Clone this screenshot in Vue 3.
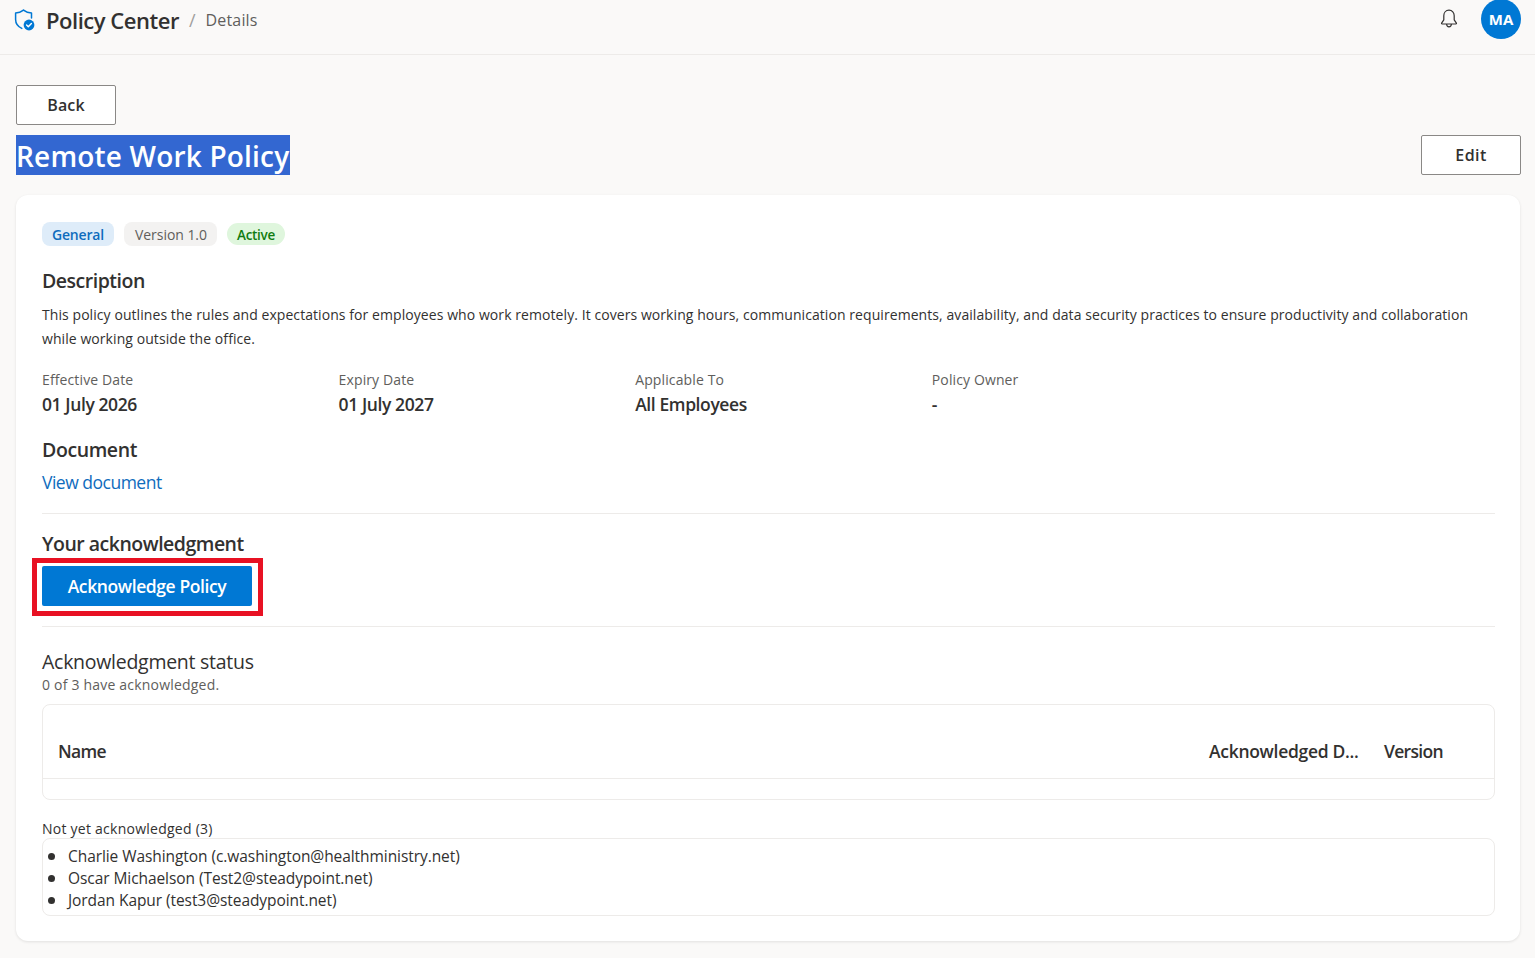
<script setup>
const meta = [
  { label: 'Effective Date', value: '01 July 2026' },
  { label: 'Expiry Date', value: '01 July 2027' },
  { label: 'Applicable To', value: 'All Employees' },
  { label: 'Policy Owner', value: '-' },
]
const pending = [
  'Charlie Washington (c.washington@healthministry.net)',
  'Oscar Michaelson (Test2@steadypoint.net)',
  'Jordan Kapur (test3@steadypoint.net)',
]
</script>

<template>
  <div class="page">
    <header class="topbar">
      <div class="brand">
        <svg class="logo" width="24" height="24" viewBox="0 0 24 24" fill="none">
          <path d="M10.5 2.2 C8 4.2 5.2 5 2.6 5.1 V11.5 C2.6 15.8 5 18.6 8.8 20.4" stroke="#0078d4" stroke-width="1.5" stroke-linejoin="round" stroke-linecap="round"/>
          <path d="M10.5 2.2 C13 4.2 15.8 5 18.5 5.1 V10" stroke="#0078d4" stroke-width="1.5" stroke-linejoin="round" stroke-linecap="round"/>
          <circle cx="16" cy="17" r="5.4" fill="#0078d4"/>
          <path d="M13.6 17.1 L15.3 18.8 L18.4 15.5" stroke="#fff" stroke-width="1.4" fill="none" stroke-linecap="round" stroke-linejoin="round"/>
        </svg>
        <span class="app-name">Policy Center</span>
        <span class="slash">/</span>
        <span class="crumb">Details</span>
      </div>
      <div class="actions">
        <svg width="20" height="20" viewBox="0 0 20 20" fill="none" stroke="#323130" stroke-width="1.2" stroke-linejoin="round">
          <path d="M10 1.2 C6.8 1.2 4.8 3.8 4.8 6.8 V10.8 L2.6 14.2 C2.4 14.7 2.6 15 3.1 15 H16.9 C17.4 15 17.6 14.7 17.4 14.2 L15.2 10.8 V6.8 C15.2 3.8 13.2 1.2 10 1.2 Z"/>
          <path d="M7.6 15 C7.7 16.8 8.7 17.9 10 17.9 C11.3 17.9 12.3 16.8 12.4 15"/>
        </svg>
        <div class="avatar">MA</div>
      </div>
    </header>

    <main class="content">
      <button class="btn">Back</button>
      <div class="title-row">
        <h1 class="title"><span>Remote Work Policy</span></h1>
        <button class="btn btn-edit">Edit</button>
      </div>

      <section class="card">
        <div class="tags">
          <span class="tag tag-blue">General</span>
          <span class="tag tag-grey">Version 1.0</span>
          <span class="tag tag-green">Active</span>
        </div>

        <h2 class="h-desc">Description</h2>
        <p class="desc">This policy outlines the rules and expectations for employees who work remotely. It covers working hours, communication requirements, availability, and data security practices to ensure productivity and collaboration while working outside the office.</p>

        <div class="meta">
          <div v-for="m in meta" :key="m.label" class="meta-item">
            <div class="meta-label">{{ m.label }}</div>
            <div class="meta-value">{{ m.value }}</div>
          </div>
        </div>

        <h2 class="h-doc">Document</h2>
        <a class="doc-link">View document</a>

        <hr class="rule rule-a" />

        <h2 class="h-ack">Your acknowledgment</h2>
        <div class="ack-frame">
          <button class="btn-primary">Acknowledge Policy</button>
        </div>

        <hr class="rule rule-b" />

        <h3 class="status-title">Acknowledgment status</h3>
        <div class="status-sub">0 of 3 have acknowledged.</div>

        <div class="table">
          <div class="thead">
            <div class="th th-name">Name</div>
            <div class="th th-date">Acknowledged D...</div>
            <div class="th th-ver">Version</div>
          </div>
          <div class="tbody"></div>
        </div>

        <div class="pending-label">Not yet acknowledged (3)</div>
        <ul class="pending">
          <li v-for="p in pending" :key="p">{{ p }}</li>
        </ul>
      </section>
    </main>
  </div>
</template>

<style>
html, body { margin: 0; background: #faf9f8; }
</style>

<style scoped>
.page {
  width: 1535px;
  height: 958px;
  overflow: hidden;
  background: #faf9f8;
  color: #323130;
  font-family: "Open Sans", "Noto Sans", sans-serif;
  box-sizing: border-box;
}
.topbar {
  height: 55px;
  box-sizing: border-box;
  border-bottom: 1px solid #edebe9;
  display: flex;
  justify-content: space-between;
  align-items: flex-start;
  padding: 0 14px 0 13px;
}
.brand { display: flex; align-items: center; height: 40px; }
.logo { margin-right: 9px; }
.app-name { font-size: 22px; font-weight: 600; letter-spacing: -0.47px; color: #323130; }
.slash { font-size: 18px; color: #a19f9d; margin: 0 10px; }
.crumb { font-size: 16px; letter-spacing: 0.15px; color: #605e5c; }
.actions { display: flex; align-items: center; height: 38px; gap: 22px; }
.avatar {
  width: 40px; height: 40px; border-radius: 50%;
  background: #0078d4; color: #fff;
  display: flex; align-items: center; justify-content: center;
  font-size: 15px; font-weight: 700; letter-spacing: 0.1px;
  margin-top: -1px;
}
.content { padding: 30px 14px 0 16px; }
.btn {
  display: block;
  width: 100px; height: 40px;
  box-sizing: border-box;
  background: #fff;
  border: 1px solid #8a8886;
  border-radius: 2px;
  font-family: inherit;
  font-size: 16px;
  font-weight: 600;
  letter-spacing: 0.15px;
  color: #323130;
  padding: 0;
}
.btn-edit { letter-spacing: 0.4px; }
.title-row {
  display: flex; justify-content: space-between; align-items: center;
  margin-top: 10px; height: 40px;
}
.title { margin: 0; font-size: 28px; font-weight: 600; line-height: 42px; height: 40px; letter-spacing: 0.18px; }
.title span { display: block; height: 40px; background: #3367d1; color: #fff; width: 274px; white-space: nowrap; overflow: hidden; }
.card {
  margin: 20px 1px 0 0;
  height: 746px;
  box-sizing: border-box;
  background: #fff;
  border-radius: 12px;
  box-shadow: 0 1px 3px rgba(0,0,0,.1);
  padding: 26px 25px 0 26px;
}
.tags { display: flex; gap: 10px; align-items: center; height: 25px; }
.tag {
  font-size: 14px; line-height: 25px; height: 24px;
  padding: 0 10px; border-radius: 8px; box-sizing: border-box; white-space: nowrap;
}
.tag-blue { background: #deecf9; color: #0f6cbd; font-weight: 600; width: 72px; letter-spacing: -0.2px; }
.tag-grey { background: #f3f2f1; color: #605e5c; width: 93px; letter-spacing: -0.05px; padding-left: 11px; }
.tag-green { background: #dff6dd; color: #107c10; font-weight: 600; border-radius: 11px; height: 22px; line-height: 24px; width: 58px; font-size: 13.5px; letter-spacing: -0.3px; }
h2 { margin: 0; font-size: 19.5px; font-weight: 600; line-height: 26px; color: #323130; }
.h-desc { margin-top: 22px; letter-spacing: -0.48px; }
.desc {
  margin: 9px 0 0; font-size: 14px; line-height: 24px; letter-spacing: 0.07px; color: #323130;
}
.meta { display: grid; grid-template-columns: repeat(5, 1fr); margin-top: 19px; width: 1483px; }
.meta-item { min-width: 0; }
.meta-label { font-size: 14px; letter-spacing: 0.12px; line-height: 20px; color: #605e5c; }
.meta-value { font-size: 17.5px; font-weight: 600; letter-spacing: -0.4px; line-height: 26px; margin-top: 1px; }
.h-doc { margin-top: 20px; letter-spacing: -0.4px; }
.doc-link { display: block; margin-top: 6px; font-size: 17.5px; letter-spacing: -0.5px; line-height: 26px; color: #0f6cbd; }
.rule { border: 0; border-top: 1px solid #edebe9; margin: 0; }
.rule-a { margin-top: 18px; }
.h-ack { margin-top: 17px; letter-spacing: -0.5px; }
.ack-frame {
  width: fit-content;
  margin: 1px 0 0 -10px;
  border: 5px solid #e81123;
  padding: 3px 6px 5px 5px;
}
.btn-primary {
  display: block; width: 210px; height: 40px;
  background: #0078d4; color: #fff; border: 0; border-radius: 2px;
  font-family: inherit; font-size: 17.5px; font-weight: 600; letter-spacing: -0.4px; padding: 0;
}
.rule-b { margin-top: 10px; }
.status-title { margin: 22px 0 0; font-size: 19.5px; font-weight: 400; letter-spacing: -0.27px; line-height: 26px; color: #323130; }
.status-sub { font-size: 14px; letter-spacing: 0.2px; line-height: 18px; color: #605e5c; margin-top: 1px; }
.table {
  margin-top: 10px; height: 96px; box-sizing: border-box;
  border: 1px solid #edebe9; border-radius: 8px;
}
.thead {
  height: 74px; box-sizing: border-box; border-bottom: 1px solid #edebe9;
  display: flex; align-items: center; padding: 18px 0 0 15px;
}
.th { font-size: 17.5px; font-weight: 600; letter-spacing: -0.7px; }
.th-name { flex: 1; }
.th-date { width: 175px; letter-spacing: -0.3px; }
.th-ver { width: 110px; }
.pending-label { margin-top: 20px; font-size: 14px; letter-spacing: 0.25px; line-height: 18px; color: #323130; }
.pending {
  margin: 0; height: 78px; box-sizing: border-box;
  border: 1px solid #edebe9; border-radius: 8px;
  padding: 6px 0 0 5px;
  list-style: none;
  font-size: 15.5px; letter-spacing: -0.07px; line-height: 22px; color: #323130;
}
.pending li { display: flex; align-items: center; gap: 13px; }
.pending li::before { content: ""; width: 7px; height: 7px; border-radius: 50%; background: #323130; flex: none; }
</style>
